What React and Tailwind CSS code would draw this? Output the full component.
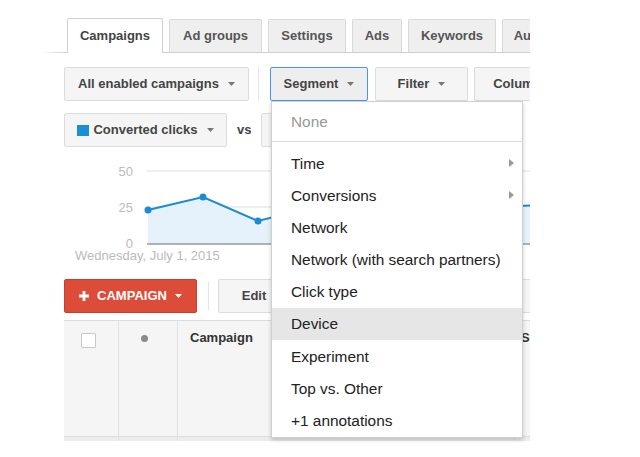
import React from 'react';

const Caret = ({ color = '#777' }) => (
  <svg width="7" height="4" viewBox="0 0 7 4" className="shrink-0">
    <path d="M0 0h7L3.5 4z" fill={color} />
  </svg>
);

const Btn = ({ width, active = false, children }) => (
  <div
    className={`${width} shrink-0 h-[34px] flex items-center justify-center gap-[9px] rounded-[2px] border text-[13px] font-bold text-[#444] whitespace-nowrap ${
      active ? 'bg-[#eeeeee] border-[#4d90fe]' : 'bg-[#f5f5f5] border-[#dcdcdc]'
    }`}
  >
    {children}
  </div>
);

const tabs = [
  { label: 'Campaigns', width: 'w-[96px]', active: true },
  { label: 'Ad groups', width: 'w-[93px]' },
  { label: 'Settings', width: 'w-[78px]' },
  { label: 'Ads', width: 'w-[50px]' },
  { label: 'Keywords', width: 'w-[88px]' },
  { label: 'Auto targets', width: 'w-[100px]' },
];

const menuItems = [
  { label: 'Time', sub: true },
  { label: 'Conversions', sub: true },
  { label: 'Network' },
  { label: 'Network (with search partners)' },
  { label: 'Click type' },
  { label: 'Device', hover: true },
  { label: 'Experiment' },
  { label: 'Top vs. Other' },
  { label: '+1 annotations' },
];

// chart coords: origin at page (64, 160)
const points = [
  [84, 50],
  [139, 37],
  [194, 61],
  [249, 47],
  [304, 52],
  [359, 40],
  [414, 48],
  [500, 44],
];

const Chart = () => {
  const line = points.map((p) => p.join(',')).join(' ');
  const area = `84,84 ${line} 500,84`;
  return (
    <svg width="466" height="88" className="block overflow-visible">
      <line x1="83" y1="11" x2="500" y2="11" stroke="#dedede" />
      <line x1="83" y1="47" x2="500" y2="47" stroke="#dedede" />
      <polygon points={area} fill="#e6f2fb" />
      <line x1="83" y1="84" x2="500" y2="84" stroke="#9a9a9a" strokeWidth="1.5" />
      <polyline points={line} fill="none" stroke="#1c8bd3" strokeWidth="2" />
      {points.slice(0, -1).map(([x, y]) => (
        <circle key={x} cx={x} cy={y} r="3.5" fill="#1c8bd3" />
      ))}
      <g fontSize="13" fill="#bbbbbb" textAnchor="end">
        <text x="69" y="16">50</text>
        <text x="69" y="52">25</text>
        <text x="69" y="88">0</text>
      </g>
    </svg>
  );
};

const SegmentMenu = () => (
  <div className="absolute top-full left-[1px] z-10 w-[252px] bg-white border border-[#d0d0d0] shadow-[0_2px_4px_rgba(0,0,0,0.2)] font-normal text-[15.4px]">
    <div className="h-[40px] flex items-center pl-[19px] text-[#999] border-b border-[#dcdcdc]">None</div>
    <div className="pt-[5px]">
      {menuItems.map((item) => (
        <div
          key={item.label}
          className={`h-[32.2px] flex items-center justify-between pl-[19px] pr-[8px] text-[#222] ${
            item.hover ? 'bg-[#e6e6e6]' : ''
          }`}
        >
          <span>{item.label}</span>
          {item.sub && (
            <svg width="5" height="8" viewBox="0 0 5 8">
              <path d="M0 0l5 4-5 4z" fill="#999" />
            </svg>
          )}
        </div>
      ))}
    </div>
  </div>
);

export default function App() {
  return (
    <div className="w-[640px] h-[457px] bg-white overflow-hidden font-['Liberation_Sans',Arial,sans-serif]">
      <div className="ml-[40px] w-[490px] h-full overflow-hidden pt-[19px]">
        {/* tabs */}
        <div className="flex items-end h-[34px]">
          <div className="w-[27px] h-px shrink-0 bg-linear-to-r from-white to-[#cfcfcf]" />
          <div className="flex items-end gap-[6px] h-full border-b border-[#cfcfcf]">
            {tabs.map((t) =>
              t.active ? (
                <div
                  key={t.label}
                  className={`${t.width} shrink-0 h-[35px] -mb-px flex items-center justify-center bg-white border border-b-0 border-[#cfcfcf] rounded-t-[2px] text-[13px] font-bold text-[#444]`}
                >
                  {t.label}
                </div>
              ) : (
                <div
                  key={t.label}
                  className={`${t.width} shrink-0 h-[33px] flex items-center justify-center bg-[#efefef] border border-b-0 border-[#dadada] rounded-t-[2px] text-[13px] font-bold text-[#555] whitespace-nowrap`}
                >
                  {t.label}
                </div>
              )
            )}
          </div>
        </div>

        {/* toolbar */}
        <div className="flex items-center mt-[14px] pl-[24px]">
          <Btn width="w-[185px]">
            All enabled campaigns <Caret />
          </Btn>
          <div className="ml-[9px] w-px h-[34px] bg-[#e6e6e6] shrink-0" />
          <div className="relative ml-[11px]">
            <Btn width="w-[98px]" active>
              Segment <Caret />
            </Btn>
            <SegmentMenu />
          </div>
          <div className="ml-[7px]">
            <Btn width="w-[93px]">
              Filter <Caret />
            </Btn>
          </div>
          <div className="ml-[6px]">
            <Btn width="w-[110px]">
              Columns <Caret />
            </Btn>
          </div>
        </div>

        {/* metric selectors */}
        <div className="flex items-center mt-[12px] pl-[24px]">
          <Btn width="w-[163px]">
            <span className="flex items-center gap-[4px]">
              <span className="w-[12px] h-[11px] bg-[#1a8fd6]" />
              Converted clicks
            </span>
            <Caret />
          </Btn>
          <span className="ml-[10px] text-[13px] font-bold text-[#444]">vs</span>
          <div className="ml-[10px]">
            <Btn width="w-[160px]">
              None <Caret />
            </Btn>
          </div>
        </div>

        {/* chart */}
        <div className="mt-[13px] pl-[24px]">
          <Chart />
          <div className="h-[16px] pl-[11px] text-[13px] leading-[16px] text-[#bbb]">Wednesday, July 1, 2015</div>
        </div>

        {/* actions */}
        <div className="flex items-center mt-[15px] pl-[24px]">
          <div className="w-[133px] h-[34px] shrink-0 flex items-center justify-center gap-[8px] bg-[#dd4b39] border border-[#c6402f] rounded-[2px] text-white text-[13px] font-bold">
            <svg width="10" height="10" viewBox="0 0 10 10">
              <path d="M3.6 0h2.8v3.6H10v2.8H6.4V10H3.6V6.4H0V3.6h3.6z" fill="#fff" />
            </svg>
            CAMPAIGN
            <Caret color="#fff" />
          </div>
          <div className="ml-[11px] w-px h-[28px] bg-[#e6e6e6] shrink-0" />
          <div className="ml-[9px]">
            <Btn width="w-[88px]">Edit <Caret /></Btn>
          </div>
          <div className="ml-[8px]">
            <Btn width="w-[260px]">Details <Caret /></Btn>
          </div>
        </div>

        {/* table */}
        <div className="mt-[7px] ml-[24px] w-[520px] bg-[#f5f5f5] border-t border-[#dcdcdc]">
          <div className="flex h-[115px]">
            <div className="w-[55px] shrink-0 border-r border-[#e0e0e0] pt-[12px] pl-[17px]">
              <div className="w-[15px] h-[15px] bg-white border border-[#c8c8c8] rounded-[1px]" />
            </div>
            <div className="w-[59px] shrink-0 border-r border-[#e0e0e0] pt-[14px] pl-[22px]">
              <div className="w-[7px] h-[7px] rounded-full bg-[#8a8a8a]" />
            </div>
            <div className="w-[337px] shrink-0 border-r border-[#e0e0e0] pt-[9px] pl-[12px] text-[13px] leading-[16px] font-bold text-[#333]">
              Campaign
            </div>
            <div className="pt-[9px] pl-[6px] text-[13px] leading-[16px] font-bold text-[#333]">Status</div>
          </div>
          <div className="flex h-[5px] border-t border-[#dcdcdc] bg-[#ececec]">
            <div className="w-[55px] shrink-0 border-r border-[#e0e0e0]" />
            <div className="w-[59px] shrink-0 border-r border-[#e0e0e0]" />
            <div className="w-[337px] shrink-0 border-r border-[#e0e0e0]" />
          </div>
        </div>
      </div>
    </div>
  );
}
